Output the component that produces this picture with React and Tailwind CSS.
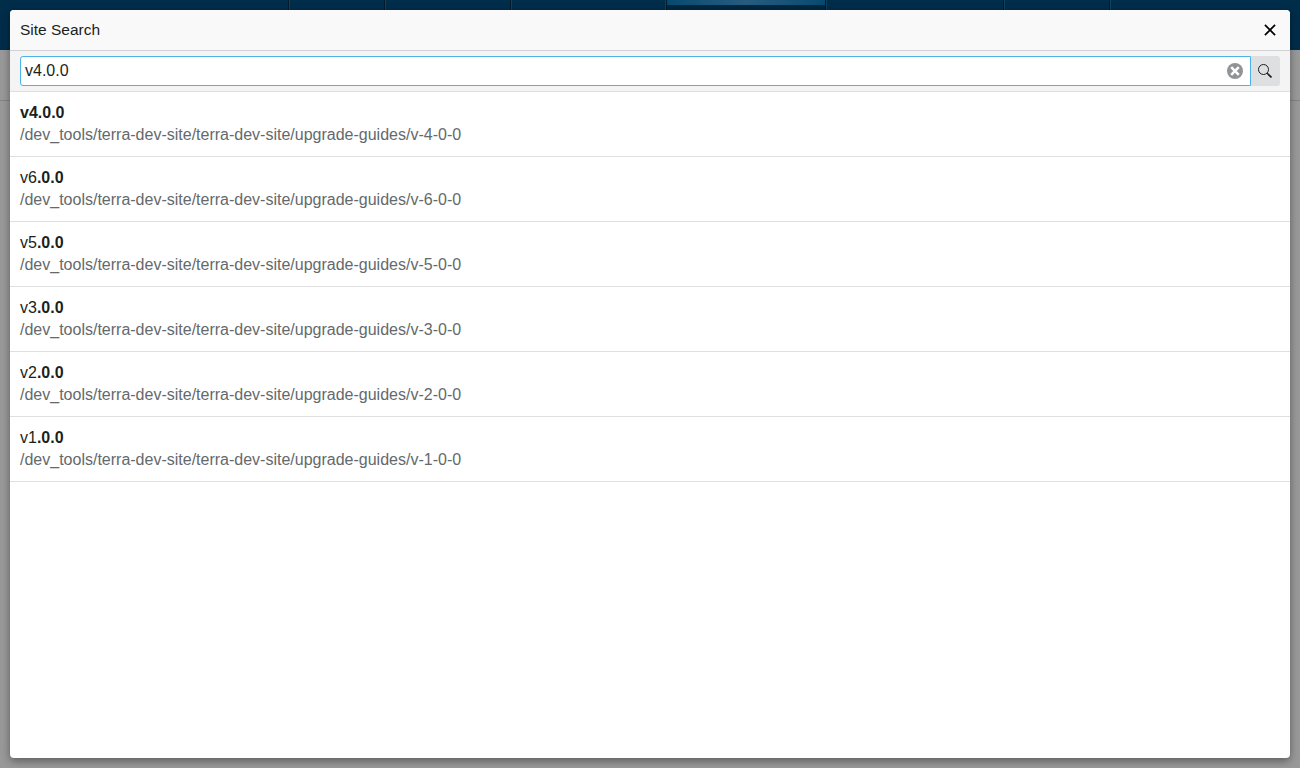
import React from "react";

const results = [
  { version: "4", lead: "", match: "v4.0.0" },
  { version: "6", lead: "v6", match: ".0.0" },
  { version: "5", lead: "v5", match: ".0.0" },
  { version: "3", lead: "v3", match: ".0.0" },
  { version: "2", lead: "v2", match: ".0.0" },
  { version: "1", lead: "v1", match: ".0.0" },
];

const tabs = [
  { width: "w-[290px]" },
  { width: "w-24" },
  { width: "w-[126px]" },
  { width: "w-[155px]", beforeActive: true },
  { width: "w-40", active: true },
  { width: "w-[178px]" },
  { width: "w-[106px]" },
];

function Divider({ reversed }) {
  return (
    <div className={`flex h-full w-0.5 ${reversed ? "flex-row-reverse" : "flex-row"}`}>
      <div className="w-px bg-[#001b2c]" />
      <div className="w-px bg-[#0d4262]" />
    </div>
  );
}

function PageBehind() {
  return (
    <div className="h-full bg-[#999999]">
      <div className="flex h-[50px] bg-[#002d4a]">
        {tabs.map((tab, i) => (
          <div key={i} className={`flex h-full justify-end ${tab.width}`}>
            {tab.active && (
              <div className="h-full flex-1 bg-[#002840]">
                <div className="h-[5px] bg-linear-to-r from-[#064a70] via-[#265c80] to-[#064a70]" />
              </div>
            )}
            <Divider reversed={tab.beforeActive} />
          </div>
        ))}
      </div>
      <div className="h-[51px] border-b border-[#828384]" />
    </div>
  );
}

function Header() {
  return (
    <header className="flex h-[41px] items-center justify-between border-b border-[#d0d1d2] bg-[#f9f9f9] pr-3.5 pl-2.5">
      <h1 className="text-[15.5px] leading-5">Site Search</h1>
      <button aria-label="Close" className="block">
        <svg className="block h-3 w-3" viewBox="0 0 12 12" fill="none" stroke="#000" strokeWidth="1.75">
          <path d="M.9 .9l10.2 10.2M11.1 .9L.9 11.1" />
        </svg>
      </button>
    </header>
  );
}

function SearchBar() {
  return (
    <div className="flex h-[41px] items-center border-b border-[#dedfe0] bg-[#f4f4f4] px-2.5">
      <div className="flex h-[30px] flex-1 items-center justify-between rounded-l-[3px] border border-[#4cb2e9] bg-white pr-[7px] pl-1">
        <span>v4.0.0</span>
        <svg className="block h-4 w-4" viewBox="0 0 16 16">
          <circle cx="8" cy="8" r="8" fill="#909496" />
          <path d="M4.2 4.2l7.6 7.6M11.8 4.2l-7.6 7.6" stroke="#fff" strokeWidth="2.5" />
        </svg>
      </div>
      <button
        aria-label="Search"
        className="flex h-[30px] w-[29px] items-center rounded-r-[3px] bg-[#dedfe0] pl-[7px]"
      >
        <svg className="block h-3.5 w-3.5" viewBox="0 0 14 14" fill="none" stroke="#1c1f21">
          <circle cx="5.5" cy="5.5" r="5" strokeWidth="1" />
          <path d="M9 9l1.2 1.2" strokeWidth="1" />
          <path d="M9.8 9.8l3.7 3.6" strokeWidth="1.8" />
        </svg>
      </button>
    </div>
  );
}

function Result({ item }) {
  return (
    <li className="h-[65px] border-b border-[#dedfe0] px-2.5 pt-2.5 leading-[22px]">
      <div>
        {item.lead}
        <strong className="font-bold">{item.match}</strong>
      </div>
      <div className="text-[#64696c]">
        /dev_tools/terra-dev-site/terra-dev-site/upgrade-guides/v-{item.version}-0-0
      </div>
    </li>
  );
}

export default function App() {
  return (
    <div className="grid h-screen overflow-hidden font-['Liberation_Sans',Arial,sans-serif] text-base text-[#1c1f21]">
      <div className="col-start-1 row-start-1">
        <PageBehind />
      </div>
      <main className="z-10 col-start-1 row-start-1 m-2.5 overflow-hidden rounded bg-white shadow-[0_3px_9px_rgba(0,0,0,0.4)]">
        <Header />
        <SearchBar />
        <ul>
          {results.map((item) => (
            <Result key={item.version} item={item} />
          ))}
        </ul>
      </main>
    </div>
  );
}
